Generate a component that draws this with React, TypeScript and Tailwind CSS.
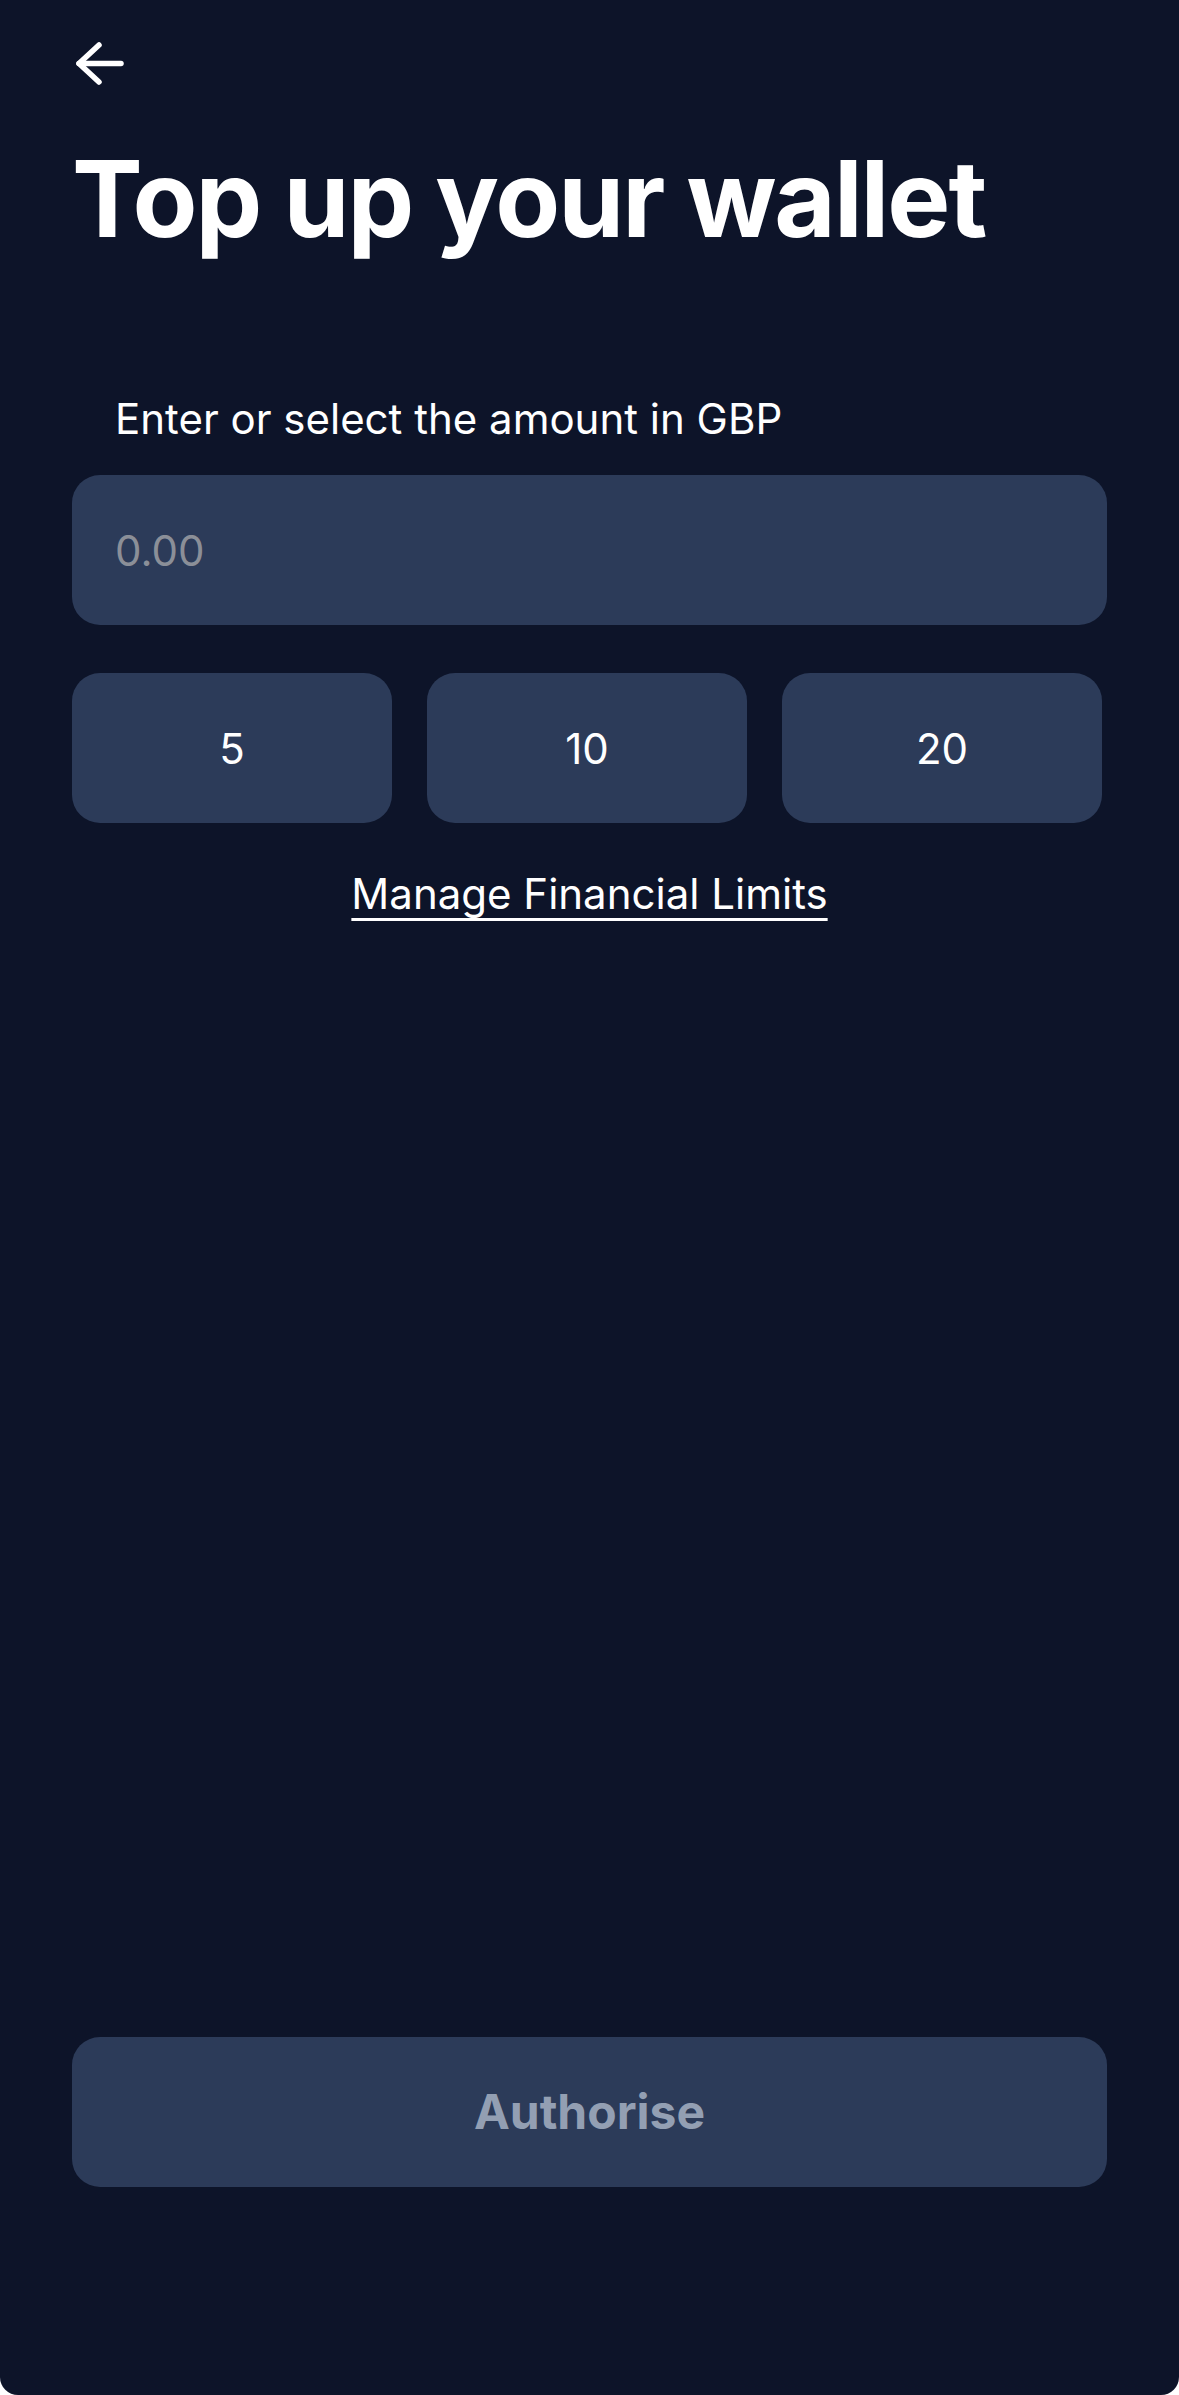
import React from 'react';

const amounts = ['5', '10', '20'];

const BackArrow: React.FC = () => (
    <svg width="52" height="47" viewBox="0 0 52 47" fill="none" stroke="white" strokeWidth="5.5" strokeLinecap="round" strokeLinejoin="round">
        <path d="M48 23.5H6" />
        <path d="M26 5L6 23.5L26 42" />
    </svg>
);

const App: React.FC = () => {
    return (
        <div className="bg-white min-h-[2395px] w-full" style={{ fontFamily: 'Inter, "Noto Sans", sans-serif' }}>
            <div className="bg-[#0d1429] min-h-[2395px] w-full rounded-b-[18px] flex flex-col px-[72px] pt-[40px] pb-[208px]">
                <button className="w-[52px] h-[47px] ml-[1px]">
                    <BackArrow />
                </button>

                <h1 className="mt-[58px] text-[106px] leading-[108px] font-bold text-white tracking-[-2px]">
                    Top up your wallet
                </h1>

                <label className="mt-[142px] pl-[43px] text-[42px] leading-[48px] text-white">
                    Enter or select the amount in GBP
                </label>

                <input
                    type="text"
                    placeholder="0.00"
                    className="mt-[32px] h-[150px] w-full rounded-[28px] bg-[#2c3b59] px-[43px] text-[42px] text-white placeholder:text-[#8b8f98] outline-none"
                />

                <div className="mt-[48px] grid grid-cols-3 gap-[35px] w-[1030px]">
                    {amounts.map((a) => (
                        <button key={a} className="h-[150px] rounded-[28px] bg-[#2c3b59] text-[42px] text-white">
                            {a}
                        </button>
                    ))}
                </div>

                <a href="#" className="mt-[47px] self-center text-[42px] leading-[48px] text-white underline underline-offset-[9px] decoration-[3px]">
                    Manage Financial Limits
                </a>

                <button className="mt-auto h-[150px] w-full rounded-[28px] bg-[#2c3b59] text-[48px] font-bold text-[#939fb3]">
                    Authorise
                </button>
            </div>
        </div>
    );
};

export default App;
